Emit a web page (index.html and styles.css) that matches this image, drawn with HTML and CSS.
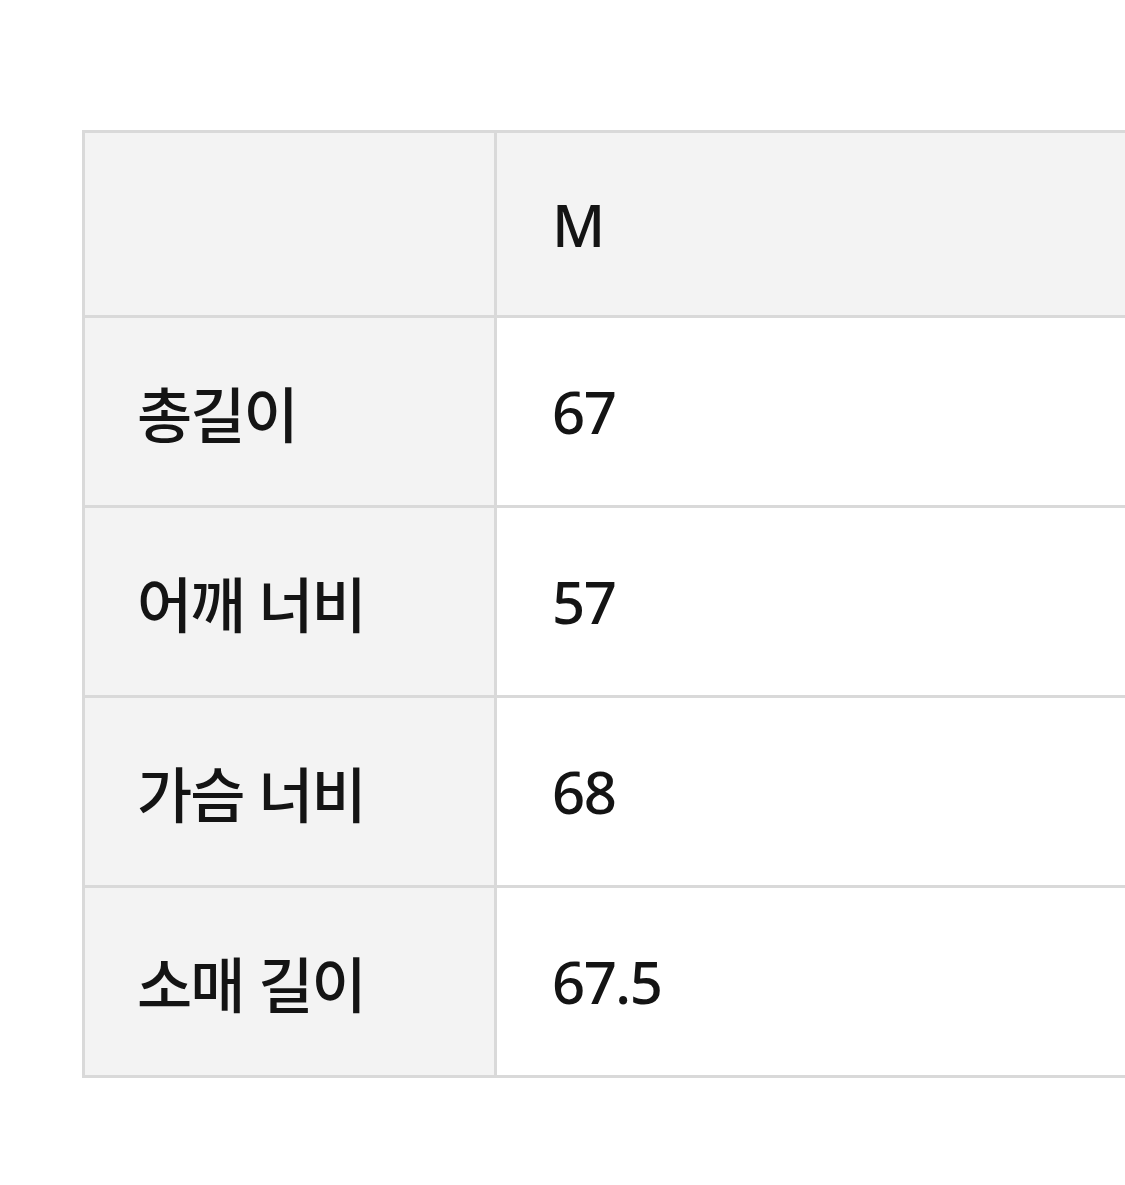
FILE: index.html
```html
<!DOCTYPE html>
<html lang="ko">
<head>
<meta charset="utf-8">
<link rel="stylesheet" href="styles.css">
</head>
<body>
<div class="page">
  <table class="size-table">
    <tr class="head">
      <th class="label"></th>
      <th class="value">M</th>
    </tr>
    <tr>
      <th class="label">총길이</th>
      <td class="value">67</td>
    </tr>
    <tr>
      <th class="label">어깨 너비</th>
      <td class="value">57</td>
    </tr>
    <tr>
      <th class="label">가슴 너비</th>
      <td class="value">68</td>
    </tr>
    <tr>
      <th class="label">소매 길이</th>
      <td class="value">67.5</td>
    </tr>
  </table>
</div>
</body>
</html>
```

FILE: styles.css
```css
html, body {
  margin: 0;
  padding: 0;
  background: #ffffff;
  overflow: hidden;
}

.page {
  padding: 130px 0 0 82px;
}

.size-table {
  border-collapse: collapse;
  width: 100%;
  color: #141414;
}

.size-table th,
.size-table td {
  border: 3px solid #d9d9d9;
  text-align: left;
  vertical-align: middle;
  font-weight: 400;
  padding: 0;
}

.size-table .value {
  border-right: none;
}

.size-table tr {
  height: 190px;
}

.size-table tr.head {
  height: 185px;
}

.label {
  width: 357px;
  padding-left: 52px !important;
  background: #f3f3f3;
  font-family: "Noto Sans CJK KR", "Noto Sans", sans-serif;
  font-size: 60px;
  font-weight: 500 !important;
  letter-spacing: -2px;
}

.value {
  padding-left: 55px !important;
  background: #ffffff;
  font-family: "Noto Sans", "Noto Sans CJK KR", sans-serif;
  font-size: 58px;
  font-weight: 500 !important;
  letter-spacing: -1.5px;
}

.head .value {
  background: #f3f3f3;
}
```
